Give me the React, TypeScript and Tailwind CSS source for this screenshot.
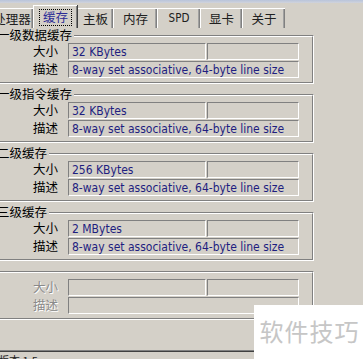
import React from "react";

const cjk = { fontFamily: '"Noto Sans CJK SC", "Noto Sans", sans-serif' };
const lat = { fontFamily: '"DejaVu Sans Condensed", "DejaVu Sans", sans-serif' };

function Tab({ label, w, selected }: { label: string; w: number; selected?: boolean }) {
  if (selected) {
    return (
      <div
        className="relative z-10 flex h-[23px] shrink-0 items-start justify-center border-l border-t border-white bg-[#d4d0c8] pt-[3px] shadow-[inset_-1px_0_0_#808080,1px_0_0_#404040]"
        style={{ width: w }}
      >
        <span
          className="flex h-[17px] items-center border border-dotted border-black px-[3px] text-[12.5px] leading-none text-[#2c2c96]"
          style={cjk}
        >
          {label}
        </span>
      </div>
    );
  }
  return (
    <div
      className="flex h-[20px] shrink-0 items-center justify-center border-l border-t border-white pt-[1px] shadow-[inset_-1px_0_0_#808080,inset_-2px_0_0_#a0a0a0]"
      style={{ width: w }}
    >
      <span
        className={(label === "SPD" ? "text-[11.5px]" : "text-[12.5px]") + " leading-none text-[#202020]"}
        style={label === "SPD" ? lat : cjk}
      >
        {label}
      </span>
    </div>
  );
}

function Field({ w, text }: { w: number; text?: string }) {
  return (
    <div
      className="flex h-[17px] shrink-0 items-center border border-b-white border-l-[#808080] border-r-white border-t-[#808080] pl-[3px] text-[12px] leading-none text-[#1e1e80]"
      style={{ width: w, ...lat }}
    >
      {text}
    </div>
  );
}

function Label({ text, disabled }: { text: string; disabled?: boolean }) {
  return (
    <div
      className={
        "w-[64px] shrink-0 text-right text-[12.5px] leading-none " +
        (disabled ? "text-[#8a8a8a] [text-shadow:1px_1px_0_#ffffff]" : "text-black")
      }
      style={cjk}
    >
      {text}
    </div>
  );
}

function Group({
  title,
  size,
  desc,
  disabled,
}: {
  title?: string;
  size?: string;
  desc?: string;
  disabled?: boolean;
}) {
  return (
    <div className="relative ml-[-8px] h-[49px] w-[322px] border border-b-white border-l-[#808080] border-r-white border-t-[#808080]">
      {title && (
        <div
          className="absolute left-[4px] top-[-8px] bg-[#d4d0c8] pr-[2px] text-[12.5px] leading-[14px] text-black"
          style={cjk}
        >
          {title}
        </div>
      )}
      <div className="flex h-full w-full flex-col gap-[1px] border border-b-[#808080] border-l-white border-r-[#808080] border-t-white pt-[6px]">
        <div className="flex items-center">
          <Label text="大小" disabled={disabled} />
          <div className="ml-[10px] flex gap-[1px]">
            <Field w={138} text={size} />
            <Field w={92} />
          </div>
        </div>
        <div className="flex items-center">
          <Label text="描述" disabled={disabled} />
          <div className="ml-[10px] flex">
            <Field w={231} text={desc} />
          </div>
        </div>
      </div>
    </div>
  );
}

export default function App() {
  const d = "8-way set associative, 64-byte line size";
  return (
    <div className="relative h-[359px] w-[363px] overflow-hidden bg-[#d4d0c8]">
      <div className="h-[3px] bg-gradient-to-b from-[#b9c4da] to-[#d0d3dc]" />
      <div className="flex h-[25px] items-end">
        <div className="ml-[-10px] flex items-end">
          <Tab label="处理器" w={43} />
          <Tab label="缓存" w={44} selected />
          <Tab label="主板" w={36} />
          <Tab label="内存" w={44} />
          <Tab label="SPD" w={43} />
          <Tab label="显卡" w={42} />
          <Tab label="关于" w={43} />
        </div>
      </div>
      <div className="mt-[7px] flex flex-col gap-[10px]">
        <Group title="一级数据缓存" size="32 KBytes" desc={d} />
        <Group title="一级指令缓存" size="32 KBytes" desc={d} />
        <Group title="二级缓存" size="256 KBytes" desc={d} />
        <Group title="三级缓存" size="2 MBytes" desc={d} />
        <Group disabled />
      </div>
      <div className="mt-[30px] h-[2px] w-full border-t border-t-[#808080] bg-[#404040]" />
      <div className="flex h-[10px] items-start pt-[3px] text-[11px] leading-none text-[#202020]" style={cjk}>
        <span className="ml-[-2px]">版本 1.5</span>
      </div>
      <div className="absolute bottom-0 right-0 flex h-[54px] w-[109px] items-center justify-center bg-white pb-[2px] pl-[2px]">
        <span className="text-[24px] leading-none tracking-[1px] text-[#c6c6c6]" style={cjk}>
          软件技巧
        </span>
      </div>
    </div>
  );
}
